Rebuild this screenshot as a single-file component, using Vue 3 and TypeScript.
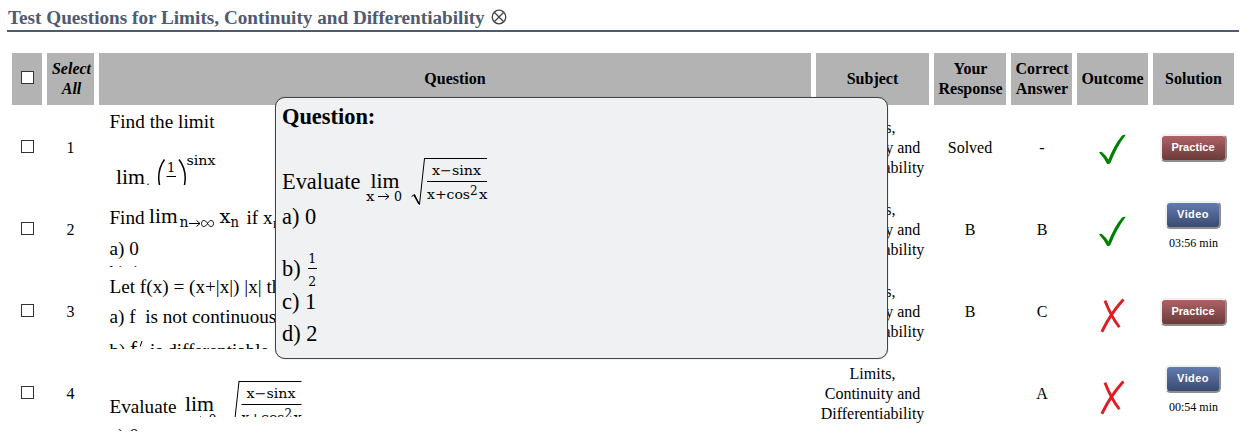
<script setup lang="ts">
interface Row {
  id: number
  response: string
  answer: string
  correct: boolean
  action: 'Practice' | 'Video'
  duration?: string
}

const rows: Row[] = [
  { id: 1, response: 'Solved', answer: '-', correct: true, action: 'Practice' },
  { id: 2, response: 'B', answer: 'B', correct: true, action: 'Video', duration: '03:56 min' },
  { id: 3, response: 'B', answer: 'C', correct: false, action: 'Practice' },
  { id: 4, response: '', answer: 'A', correct: false, action: 'Video', duration: '00:54 min' },
]
</script>

<template>
  <main class="page">
    <header class="title">
      <h1>Test Questions for Limits, Continuity and Differentiability</h1>
      <svg class="close" width="16" height="16" viewBox="0 0 16 16">
        <circle cx="8" cy="8" r="6.8" />
        <path d="M3.3 3.3 12.7 12.7M12.7 3.3 3.3 12.7" />
      </svg>
    </header>

    <section class="table">
      <div class="th"><span class="box"></span></div>
      <div class="th select">Select<br />All</div>
      <div class="th">Question</div>
      <div class="th">Subject</div>
      <div class="th wide">Your<br />Response</div>
      <div class="th wide">Correct<br />Answer</div>
      <div class="th">Outcome</div>
      <div class="th">Solution</div>

      <template v-for="row in rows" :key="row.id">
        <div class="td"><span class="box"></span></div>
        <div class="td">{{ row.id }}</div>
        <div class="td">
          <svg v-if="row.id === 1" class="question" width="712" height="75" viewBox="0 -1 712 75">
            <text x="10.5" y="17" textLength="105">Find the limit</text>
            <text class="lim" x="17" y="72.5" textLength="29" lengthAdjust="spacingAndGlyphs">lim</text>
            <text class="dot" x="47.5" y="74">.</text>
            <path class="paren" d="M65.5 48.5Q56.5 61 61.5 78M80 48.5Q89.5 61 84.5 78" />
            <text class="math" x="68" y="60.5" font-size="13">1</text>
            <path class="rule" d="M67.5 65.5H77" />
            <text class="math" x="87.5" y="53.5" font-size="13.5" textLength="29" lengthAdjust="spacingAndGlyphs">sinx</text>
          </svg>
          <svg v-else-if="row.id === 2" class="question" width="712" height="75" viewBox="0 -1 712 75">
            <text x="10.5" y="31" textLength="35">Find</text>
            <text class="lim" x="50" y="30" textLength="28.5" lengthAdjust="spacingAndGlyphs">lim</text>
            <text class="math" x="80.5" y="34" font-size="14" textLength="9" lengthAdjust="spacingAndGlyphs">n</text>
            <path class="thin" d="M90 30.5h11m-3.5-3l3.5 3-3.5 3" />
            <path class="thin" d="M108.5 30.5c-2-4-6-4-6 0s4 4 6 0 6-4 6 0-4 4-6 0" />
            <text class="math" x="120.5" y="30" font-size="18" textLength="11" lengthAdjust="spacingAndGlyphs">x</text>
            <text class="math" x="131.5" y="34" font-size="14" textLength="8.5" lengthAdjust="spacingAndGlyphs">n</text>
            <text x="147.5" y="31">if x</text>
            <text x="174" y="35" font-size="14">n</text>
            <text x="10.5" y="62">a) 0</text>
            <text x="10.5" y="86">b) 1</text>
          </svg>
          <svg v-else-if="row.id === 3" class="question" width="712" height="75" viewBox="0 -1 712 75">
            <text x="10.5" y="17.5">Let f(x) = (x+|x|) |x| then</text>
            <text x="10.5" y="47.5">a) f&nbsp; is not continuous</text>
            <text x="10.5" y="82.4">b)</text>
            <text x="31" y="81" font-size="21.5">f</text>
            <path class="thin" d="M43 66l-1.8 5.5" />
            <text x="51" y="82.4" textLength="119">is differentiable</text>
          </svg>
          <svg v-else class="question" width="712" height="75" viewBox="0 -1 712 75">
            <text x="10.5" y="55.5" textLength="67" lengthAdjust="spacingAndGlyphs">Evaluate</text>
            <svg x="80" y="0" width="123" height="60">
              <use href="#limit-root" x="1.5" y="23" />
            </svg>
            <text x="10.5" y="85.4">a) 0</text>
          </svg>
        </div>
        <div class="td">Limits,<br />Continuity and<br />Differentiability</div>
        <div class="td">{{ row.response }}</div>
        <div class="td answer">{{ row.answer }}</div>
        <div class="td">
          <svg v-if="row.correct" class="tick" width="27" height="31" viewBox="0 0 27 31">
            <path d="M0 18.6Q2 17 3.4 18.5Q7 21.5 9.4 25.5Q15 11 23 1.4Q25 .3 26.8 .8Q18 12.5 11.4 29Q10 30.8 8 29.7Q4.5 23.2 0 18.6Z" />
          </svg>
          <svg v-else class="cross" width="25" height="35" viewBox="0 0 25 35">
            <path d="M5.5 4Q11 18 18.5 28M22.5 2.5Q10.5 16 2.5 32.5" />
          </svg>
        </div>
        <div class="td solution" :class="{ timed: row.duration }">
          <button :class="row.action === 'Video' ? 'video' : 'practice'">{{ row.action }}</button>
          <small v-if="row.duration">{{ row.duration }}</small>
        </div>
      </template>
    </section>

    <aside class="popup">
      <b class="line">Question:</b>
      <div class="line stem">
        <span>Evaluate</span>
        <svg class="formula" width="123" height="50" viewBox="0 0 123 50">
          <g id="limit-root">
            <text class="lim" x="4.5" y="31" textLength="29" lengthAdjust="spacingAndGlyphs">lim</text>
            <text class="math" x="0" y="43.5" font-size="13" textLength="8.5" lengthAdjust="spacingAndGlyphs">x</text>
            <path class="thin" d="M12 39.5h11m-3.5-3l3.5 3-3.5 3" />
            <text class="math" x="28" y="43.5" font-size="13" textLength="8" lengthAdjust="spacingAndGlyphs">0</text>
            <path class="thin" d="M45.5 39.5l3-2 5 10L58.5 1.5" />
            <path class="thick" d="M48 38l5 9" />
            <path class="rule" d="M58 1.5H121M61 24.5H121" />
            <text class="math" x="66" y="18" font-size="13" textLength="49" lengthAdjust="spacingAndGlyphs">x−sinx</text>
            <text class="math" x="61" y="42" font-size="13" textLength="43" lengthAdjust="spacingAndGlyphs">x+cos</text>
            <text class="math" x="104" y="37.5" font-size="12">2</text>
            <text class="math" x="113" y="42" font-size="13" textLength="8.5" lengthAdjust="spacingAndGlyphs">x</text>
          </g>
        </svg>
      </div>
      <div class="line a">a) 0</div>
      <div class="line b">
        <span>b)</span>
        <span class="fraction"><i>1</i><i>2</i></span>
      </div>
      <div class="line c">c) 1</div>
      <div class="line d">d) 2</div>
    </aside>
  </main>
</template>

<style>
body {
  background: #fff;
  overflow: hidden;
}
</style>

<style scoped>
.page {
  position: relative;
  box-sizing: border-box;
  width: 1251px;
  height: 434px;
  padding: 0 12px 0 7px;
  overflow: hidden;
  color: #000;
  font: 16px/20px "Liberation Serif", serif;
}
.title {
  display: flex;
  box-sizing: border-box;
  width: 1232px;
  height: 32px;
  padding: 7px 0 0 1px;
  border-bottom: 2px solid #4f5b73;
  color: #4f5b73;
}
h1 {
  margin: 0;
  font-size: 19.2px;
  line-height: 22px;
  white-space: nowrap;
}
.close {
  margin: 2px 0 0 6px;
  fill: none;
  stroke: #444;
  stroke-width: 1.3;
}
.table {
  display: grid;
  grid-template-columns: 30px 47px 712px 113px 72px 61px 71px 81px;
  grid-template-rows: 52px repeat(4, 77px);
  gap: 5px;
  margin: 21px 0 0 5px;
}
.th,
.td {
  display: flex;
  align-items: center;
  justify-content: center;
  box-sizing: border-box;
  min-width: 0;
  text-align: center;
}
.th {
  background: #b3b3b3;
  font-weight: bold;
}
.wide {
  padding-left: 1px;
}
.td {
  padding-bottom: 2px;
}
.select {
  padding-left: 2px;
  font-style: italic;
}
.answer {
  padding-left: 1px;
}
.box {
  box-sizing: border-box;
  width: 13px;
  height: 13px;
  margin: 0 0 3px 1px;
  border: 1px solid #333;
  background: #fff;
}
.question {
  display: block;
  overflow: hidden;
  font-size: 19.2px;
}
.lim {
  font-size: 21.5px;
}
.dot {
  font-size: 12px;
}
.math {
  font-family: "DejaVu Serif", serif;
}
.rule,
.thin,
.thick,
.paren {
  fill: none;
  stroke: #000;
  stroke-width: 1;
}
.thick,
.paren {
  stroke-width: 1.5;
}
.tick {
  margin-top: 3px;
  fill: #008000;
}
.cross {
  margin-top: 7px;
  fill: none;
  stroke: #e31b23;
  stroke-width: 2.9;
  stroke-linecap: square;
}
.solution {
  flex-direction: column;
}
button {
  box-sizing: border-box;
  width: 67px;
  height: 28px;
  margin: 1px 1px 0 0;
  padding: 0 0 1px;
  border: 2px solid;
  border-color: #f0f0f0 #8e8e8e #8e8e8e #f0f0f0;
  border-radius: 5px;
  background-clip: border-box;
  color: #fff;
  font: bold 11px/15px "Liberation Sans", sans-serif;
  letter-spacing: 0.05px;
}
.practice {
  background: linear-gradient(#ae6265, #6b3a3b);
}
.video {
  width: 56px;
  margin-top: 0;
  background: linear-gradient(#627bb0, #3a4b70);
  letter-spacing: 0.4px;
}
.timed {
  padding-bottom: 8px;
}
small {
  margin-top: 4px;
  font-size: 12px;
  line-height: 20px;
}
.popup {
  position: absolute;
  left: 275px;
  top: 97px;
  box-sizing: border-box;
  width: 613px;
  height: 262px;
  padding: 1px 0 0 6px;
  border: 1px solid #444;
  border-radius: 10px;
  background: #f0f1f3;
  box-shadow: 0 0 1px #777;
  font-size: 22.4px;
}
.line {
  display: flex;
  height: 35px;
  line-height: 35px;
  white-space: pre;
}
b.line {
  height: 36px;
  line-height: 36px;
}
.stem {
  height: 35px;
  margin-top: 29px;
  line-height: 36px;
}
.formula {
  flex: none;
  margin: -7px 0 0 6px;
}
.b {
  margin-top: 17px;
}
.fraction {
  display: flex;
  flex-direction: column;
  width: 9px;
  margin: -1px 0 0 7px;
  font: 12.5px/18px "DejaVu Serif", serif;
  text-align: center;
}
.fraction i {
  height: 18px;
  font-style: normal;
}
.fraction i + i {
  border-top: 1px solid #000;
  line-height: 26px;
}
.c {
  height: 31px;
  line-height: 31px;
}
.d {
  height: 33px;
  line-height: 33px;
}
</style>
